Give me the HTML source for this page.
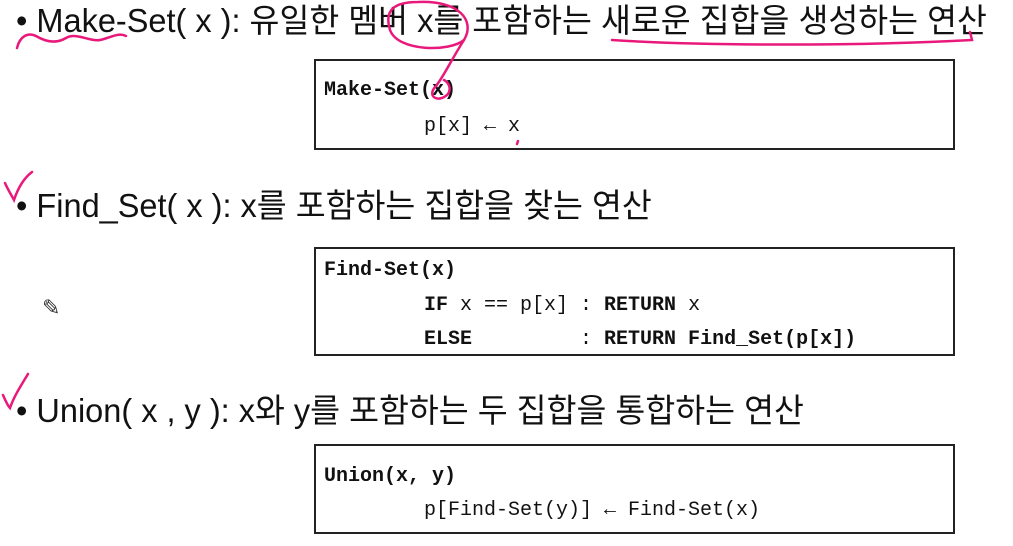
<!DOCTYPE html>
<html><head><meta charset="utf-8"><style>
html,body{margin:0;padding:0;width:1013px;height:546px;background:#fff;overflow:hidden;position:relative}
.h{position:absolute;left:16px;font-family:"Liberation Sans","Noto Sans CJK KR",sans-serif;font-size:33px;color:#111;white-space:nowrap;transform-origin:0 50%;line-height:40px;transform:scaleX(0.985)}
.box{position:absolute;left:314px;width:641px;border:2px solid #222;box-sizing:border-box}
.c{position:absolute;font-family:"Liberation Mono","DejaVu Sans Mono",monospace;font-size:20px;color:#111;white-space:pre;line-height:22px}
b{font-weight:bold}
</style></head><body>
<div class="h" style="top:1px">• Make-Set( x ): 유일한 멤버 x를 포함하는 새로운 집합을 생성하는 연산</div>
<div class="h" style="top:186px">• Find_Set( x ): x를 포함하는 집합을 찾는 연산</div>
<div class="h" style="top:391px">• Union( x , y ): x와 y를 포함하는 두 집합을 통합하는 연산</div>

<div class="box" style="top:59px;height:91px"></div>
<div class="c" style="left:324px;top:80px"><b>Make-Set(x)</b></div>
<div class="c" style="left:424px;top:116px">p[x] ← x</div>

<div class="box" style="top:247px;height:109px"></div>
<div class="c" style="left:324px;top:260px"><b>Find-Set(x)</b></div>
<div class="c" style="left:424px;top:295px"><b>IF</b> x == p[x] : <b>RETURN</b> x</div>
<div class="c" style="left:424px;top:329px"><b>ELSE</b>         : <b>RETURN Find_Set(p[x])</b></div>

<div class="box" style="top:444px;height:90px"></div>
<div class="c" style="left:324px;top:466px"><b>Union(x, y)</b></div>
<div class="c" style="left:424px;top:500px">p[Find-Set(y)] ← Find-Set(x)</div>

<div style="position:absolute;left:42px;top:296px;font-size:22px;color:#333;font-family:'DejaVu Sans',sans-serif">✎</div>

<svg width="1013" height="546" style="position:absolute;left:0;top:0" fill="none" stroke="#e8197a" stroke-width="2.5" stroke-linecap="round">
<path d="M17 48 C20 36,28 32,36 36 C46 42,56 44,66 38 C76 32,90 42,100 40 C110 38,118 32,126 36"/>
<path d="M390 30 C384 10,394 2,418 2 C458 0,476 20,464 40 C450 52,398 52,390 30 M464 40 C450 62,444 76,436 86 C426 96,438 104,448 94 C452 88,448 82,444 80"/>
<path d="M612 40 C700 46,860 46,972 40 L970 32"/>
<path d="M5 183 C8 190,12 196,14 200 C18 188,24 178,32 172"/>
<path d="M3 395 C6 402,8 406,10 408 C14 396,22 384,28 374"/>
<path d="M518 141 L517 144"/>
</svg>
</body></html>
